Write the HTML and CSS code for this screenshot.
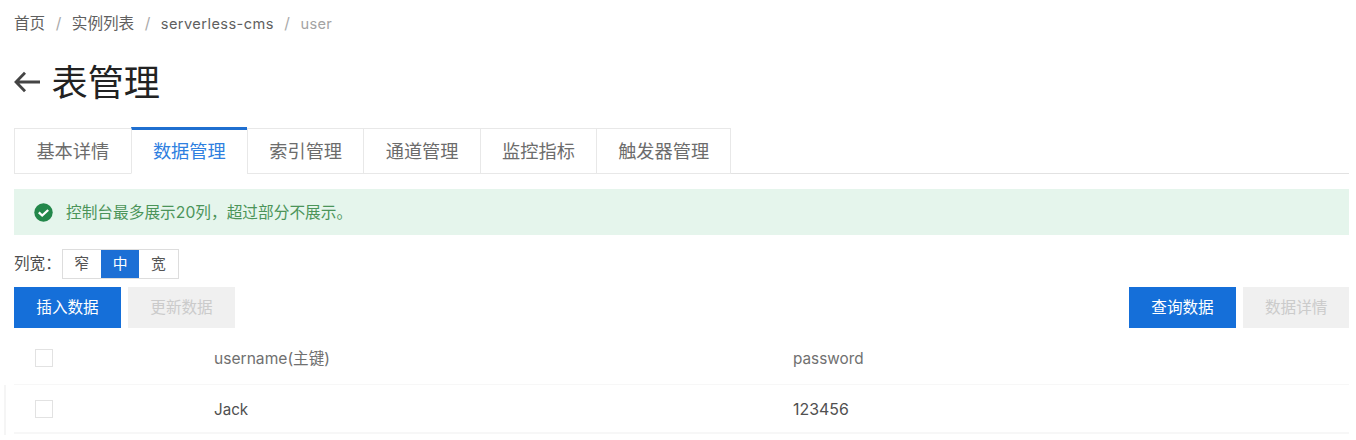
FILE: index.html
```html
<!DOCTYPE html>
<html lang="zh-CN">
<head>
<meta charset="utf-8">
<title>表管理</title>
<link rel="stylesheet" href="styles.css">
</head>
<body>
<main class="page">
  <nav class="breadcrumb">
    <span>首页</span><i class="sep">/</i><span>实例列表</span><i class="sep">/</i><span class="instance">serverless-cms</span><i class="sep">/</i><span class="current">user</span>
  </nav>
  <header class="heading">
    <svg class="back" width="28" height="24" viewBox="0 0 28 24"><path d="M26 12H2M11 2.700L2 12l9 9.300"/></svg>
    <h1>表管理</h1>
  </header>
  <div class="tabs">
    <div class="tab">基本详情</div>
    <div class="tab active">数据管理</div>
    <div class="tab">索引管理</div>
    <div class="tab">通道管理</div>
    <div class="tab">监控指标</div>
    <div class="tab last">触发器管理</div>
    <div class="tabs-rest"></div>
  </div>
  <div class="notice">
    <svg width="19" height="19" viewBox="0 0 19 19"><circle cx="9.500" cy="9.500" r="9.200"/><path d="M4.800 9.300l3.400 3.200 6-5.500"/></svg>
    <span>控制台最多展示20列，超过部分不展示。</span>
  </div>
  <div class="width-row">
    <span class="width-label">列宽：</span>
    <div class="segments"><span class="segment">窄</span><span class="segment selected">中</span><span class="segment">宽</span></div>
  </div>
  <div class="actions">
    <button class="btn primary">插入数据</button>
    <button class="btn disabled">更新数据</button>
    <span class="spacer"></span>
    <button class="btn primary">查询数据</button>
    <button class="btn disabled detail">数据详情</button>
  </div>
  <div class="row head"><span class="check"></span><span>username(主键)</span><span class="field">password</span></div>
  <div class="records">
    <div class="row record"><span class="check"></span><span class="name">Jack</span><span class="value">123456</span></div>
  </div>
</main>
</body>
</html>
```
FILE: styles.css
```css
* { box-sizing: border-box; }
body {
  margin: 0;
  background: #fff;
  color: #555;
  font: 15.6px/24px Inter, "Noto Sans CJK SC", sans-serif;
}
.page { width: 1349.400px; height: 440px; padding: 12px 0 0 14px; overflow: hidden; }
.breadcrumb { display: flex; height: 24px; color: #5f5f5f; font-size: 15.600px; white-space: nowrap; }
.breadcrumb .instance { font-size: 14.6px; letter-spacing: .43px; }
.breadcrumb .current { color: #a3a3a3; font-size: 14.6px; letter-spacing: .3px; }
.sep { width: 26.600px; color: #aaa; font-style: normal; text-align: center; }
.heading { display: flex; align-items: center; height: 44px; margin-top: 24px; gap: 9.500px; margin-bottom: 23px; }
.back { flex: none; fill: none; stroke: #444; stroke-width: 2.8; }
h1 { margin: 0; padding-top: 1px; color: #222; font-size: 36.200px; font-weight: 400; line-height: 44px; }
.tabs { display: flex; height: 47px; }
.tab {
  width: 116.400px;
  margin-top: 1px;
  border: 1px solid #e8e8e8;
  border-right: 0;
  color: #6c6c6c;
  font-size: 18.200px;
  line-height: 44px;
  text-align: center;
}
.tab:first-child { width: 116.600px; }
.tab.active { margin-top: 0; border-top: 3px solid #1f6fd0; border-bottom-color: transparent; color: #2f80e0; line-height: 42px; }
.tab.last { width: 135px; border-right: 1px solid #e8e8e8; }
.tabs-rest { flex: 1; border-bottom: 1px solid #e2e2e2; }
.notice { display: flex; align-items: center; gap: 13px; height: 46px; margin-top: 15px; padding-left: 20px; background: #e5f5ec; color: #4b9459; }
.notice span { padding-top: 1px; font-size: 15.700px; }
.notice circle { fill: #23874a; }
.notice path { fill: none; stroke: #fff; stroke-width: 2.300; }
.width-row { display: flex; height: 30px; margin-top: 14px; }
.width-label { width: 47.500px; color: #4d4d4d; line-height: 29px; white-space: nowrap; }
.segments { display: flex; border: 1px solid #ddd; background: #fff; }
.segment { width: 38.400px; color: #555; font-size: 14.800px; line-height: 28px; text-align: center; }
.segment.selected { background: #1c6fd5; color: #fff; }
.actions { display: flex; gap: 7px; height: 41px; margin-top: 8px; }
.btn { width: 107px; height: 41px; padding: 1px 0 0; border: 0; font: inherit; text-align: center; }
.primary { background: #156fd9; color: #fff; }
.disabled { background: #f0f0f0; color: #cbcbcb; }
.detail { width: 106.400px; }
.spacer { flex: 1; }
.row { display: grid; grid-template-columns: 200px 579px 1fr; align-items: center; border-bottom: 1px solid #f7f7f7; }
.head { height: 57px; padding-top: 3px; color: #707070; }
.head span:not(.check) { padding-top: 2px; }
.field { font-size: 15.300px; }
.records { height: 50px; margin-left: -10px; padding-left: 8px; border-left: 2px solid #f5f5f5; }
.record { height: 49px; padding-top: 1px; border-bottom: 2px solid #f7f7f7; color: #505050; }
.name { padding-top: 1px; font-size: 15.200px; }
.value { padding-top: 1px; font-size: 15.900px; }
.check { width: 18px; height: 18px; margin-left: 21px; border: 1px solid #e2e2e2; }
```
